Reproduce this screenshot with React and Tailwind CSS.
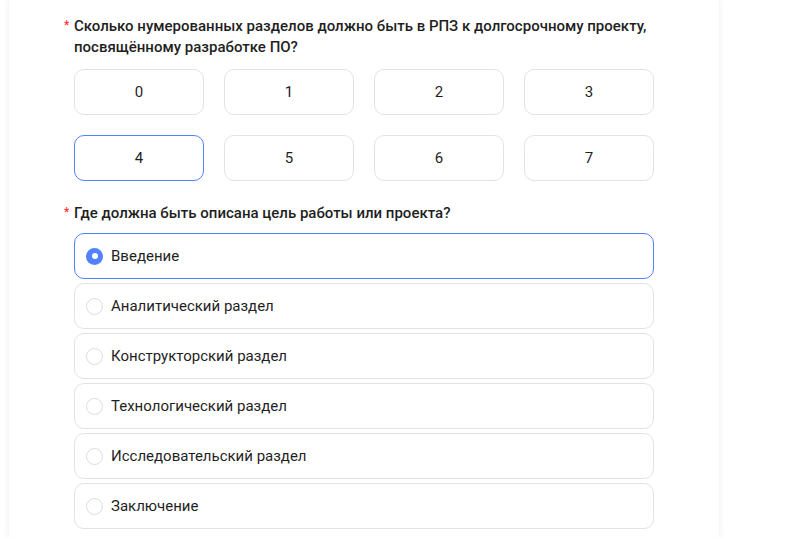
import React, { useState } from "react";

const numbers = ["0", "1", "2", "3", "4", "5", "6", "7"];
const options = [
  "Введение",
  "Аналитический раздел",
  "Конструкторский раздел",
  "Технологический раздел",
  "Исследовательский раздел",
  "Заключение",
];

const Question = ({ children }) => (
  <div className="flex text-[15px] leading-[21px] font-medium text-[#1f1f1f]">
    <span className="shrink-0 w-[10px] -ml-[10px] text-[#ff3333] text-[12px] leading-[18px]">*</span>
    <span>{children}</span>
  </div>
);

const App = () => {
  const [count, setCount] = useState("4");
  const [answer, setAnswer] = useState("Введение");

  return (
    <div className="min-h-[538px] bg-white font-['Roboto',sans-serif] overflow-hidden">
      <div className="ml-[9px] w-[710px] min-h-[538px] bg-white shadow-[0_0_6px_rgba(0,0,0,0.08)] pl-[65px] pt-[16px]">
        <div className="w-[580px]">
          <Question>
            Сколько нумерованных разделов должно быть в РПЗ к долгосрочному проекту, посвящённому разработке ПО?
          </Question>
          <div className="grid grid-cols-4 gap-x-[20px] gap-y-[20px] mt-[11px]">
            {numbers.map((n) => (
              <button
                key={n}
                onClick={() => setCount(n)}
                className={`h-[46px] rounded-[10px] border text-[15px] text-[#1f1f1f] bg-white ${
                  count === n ? "border-[#5282ff]" : "border-[#e3e3e3]"
                }`}
              >
                {n}
              </button>
            ))}
          </div>

          <div className="mt-[22px]">
            <Question>Где должна быть описана цель работы или проекта?</Question>
          </div>
          <div className="flex flex-col gap-[4px] mt-[9px]">
            {options.map((o) => {
              const active = answer === o;
              return (
                <label
                  key={o}
                  onClick={() => setAnswer(o)}
                  className={`h-[46px] flex items-center gap-[8px] px-[11px] rounded-[10px] border cursor-pointer ${
                    active ? "border-[#5282ff]" : "border-[#e3e3e3]"
                  }`}
                >
                  {active ? (
                    <span className="w-[17px] h-[17px] rounded-full bg-[#5282ff] flex items-center justify-center">
                      <span className="w-[6px] h-[6px] rounded-full bg-white" />
                    </span>
                  ) : (
                    <span className="w-[17px] h-[17px] rounded-full border border-[#dcdcdc]" />
                  )}
                  <span className="text-[15px] text-[#1f1f1f]">{o}</span>
                </label>
              );
            })}
          </div>
        </div>
      </div>
    </div>
  );
};

export default App;
